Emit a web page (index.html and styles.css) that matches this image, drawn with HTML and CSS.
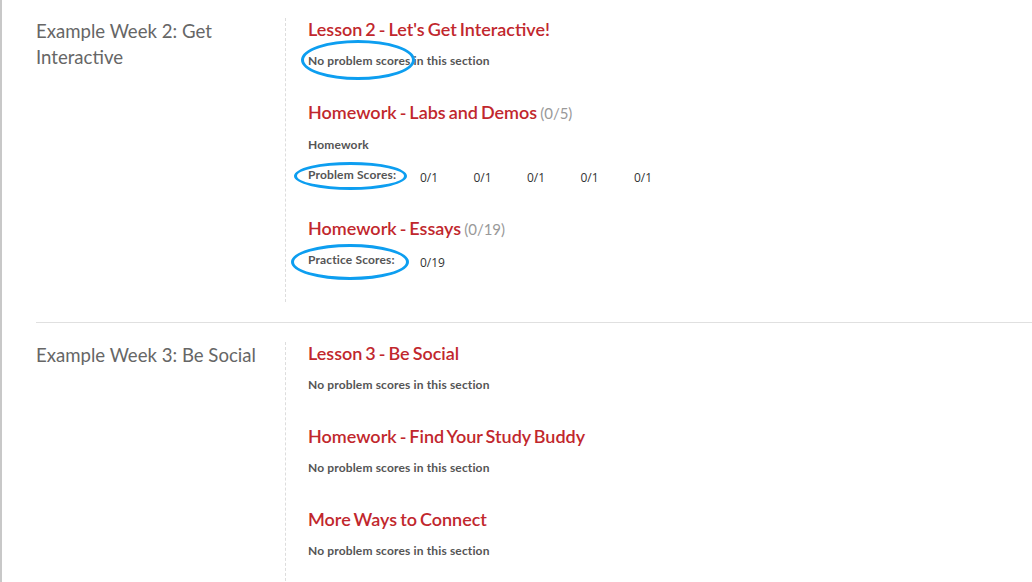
FILE: index.html
```html
<!DOCTYPE html>
<html lang="en">
<head>
  <meta charset="UTF-8">
  <title>Progress</title>
  <link rel="stylesheet" href="styles.css">
</head>
<body>

  <div class="page">

    <section class="week">
      <h2 class="week-title">Example Week 2: Get Interactive</h2>
      <div class="week-items">
        <div class="item">
          <h3 class="item-title">Lesson 2 - Let's Get Interactive!</h3>
          <p class="note"><span class="circled circled-a">No problem scores</span> in this section</p>
        </div>
        <div class="item">
          <h3 class="item-title">Homework - Labs and Demos <span class="total">(0/5)</span></h3>
          <p class="note">Homework</p>
          <div class="scores">
            <span class="scores-label"><span class="circled circled-b">Problem Scores:</span></span>
            <span class="score">0/1</span>
            <span class="score">0/1</span>
            <span class="score">0/1</span>
            <span class="score">0/1</span>
            <span class="score">0/1</span>
          </div>
        </div>
        <div class="item">
          <h3 class="item-title">Homework - Essays <span class="total">(0/19)</span></h3>
          <div class="scores scores-first">
            <span class="scores-label"><span class="circled circled-c">Practice Scores:</span></span>
            <span class="score">0/19</span>
          </div>
        </div>
      </div>
    </section>

    <section class="week">
      <h2 class="week-title">Example Week 3: Be Social</h2>
      <div class="week-items">
        <div class="item">
          <h3 class="item-title">Lesson 3 - Be Social</h3>
          <p class="note">No problem scores in this section</p>
        </div>
        <div class="item">
          <h3 class="item-title">Homework - Find Your Study Buddy</h3>
          <p class="note">No problem scores in this section</p>
        </div>
        <div class="item">
          <h3 class="item-title">More Ways to Connect</h3>
          <p class="note">No problem scores in this section</p>
        </div>
      </div>
    </section>

  </div>

</body>
</html>
```

FILE: styles.css
```css
body {
  margin: 0;
  font-family: 'Lato', 'Open Sans', sans-serif;
  background: #fff;
  overflow: hidden;
}

.page {
  border-left: 2px solid #c8c8c8;
  padding-left: 34px;
  min-height: 582px;
}

.week {
  display: flex;
  padding: 19px 0 20px;
  border-bottom: 1px solid #e0e0e0;
}

.week:first-child {
  padding-top: 18px;
}

.week:last-child {
  border-bottom: none;
  padding-bottom: 0;
}

.week-title {
  flex: none;
  width: 236px;
  padding-right: 13px;
  margin: 0;
  font-size: 18.6px;
  line-height: 26px;
  font-weight: 400;
  color: #666;
}

.week-items {
  flex: 1;
  border-left: 1px dashed #ddd;
  padding-left: 22px;
}

.item {
  margin-bottom: 32px;
}

.item-title {
  margin: 0 0 13px;
  font-size: 18px;
  line-height: 22px;
  font-weight: 600;
  word-spacing: -1.5px;
  color: #c1272d;
}

.total {
  font-size: 15px;
  font-weight: 400;
  word-spacing: 0;
  color: #999;
}

.note {
  margin: 0;
  font-size: 12px;
  line-height: 16px;
  font-weight: 700;
  letter-spacing: 0.15px;
  color: #555;
}

.scores {
  display: flex;
  align-items: flex-start;
  margin-top: 14px;
}

.scores-first {
  margin-top: -1px;
}

.scores-label {
  width: 112px;
  flex: none;
  font-size: 12px;
  line-height: 16px;
  font-weight: 700;
  letter-spacing: 0.15px;
  color: #555;
}

.score {
  width: 53.5px;
  flex: none;
  padding-top: 3px;
  font-family: 'Open Sans', 'Liberation Sans', sans-serif;
  font-size: 12px;
  line-height: 15px;
  color: #333;
}

/* annotation rings drawn over the labels */
.circled {
  position: relative;
}

.circled::after {
  content: "";
  position: absolute;
  border: 3px solid #0d9ef0;
  border-radius: 50%;
}

.circled-a::after {
  left: -7px;
  right: -5px;
  top: -13px;
  bottom: -12px;
}

.circled-b::after {
  left: -14px;
  right: -11px;
  top: -5px;
  bottom: -8px;
}

.circled-c::after {
  left: -17px;
  right: -14px;
  top: -8px;
  bottom: -13px;
}
```
